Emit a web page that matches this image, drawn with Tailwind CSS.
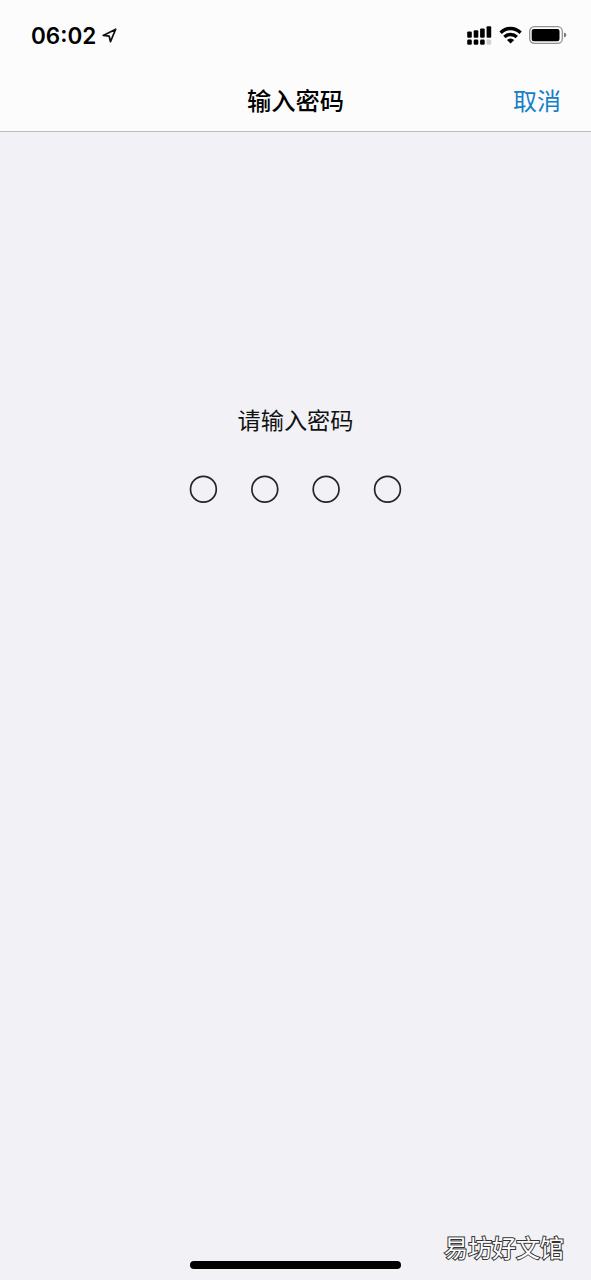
<!DOCTYPE html>
<html lang="zh-CN">
<head>
<meta charset="utf-8">
<title>输入密码</title>
<script src="https://cdn.jsdelivr.net/npm/@tailwindcss/browser@4"></script>
</head>
<body class="bg-[#f1f1f6]">
<div class="relative flex h-[1280px] w-[591px] flex-col overflow-hidden bg-[#f1f1f6] font-['Inter','Noto_Sans_CJK_SC',sans-serif] text-black">
  <header class="flex h-[132px] flex-col border-b border-[#bcbcbf] bg-[#fcfcfd]">
    <div class="flex h-[70px] items-center justify-between pl-[31px] pr-[24px]">
      <div class="flex items-center gap-[6px]">
        <span class="pt-[2px] text-[22.5px] leading-[30px] font-semibold">06:02</span>
        <svg class="mt-px h-[15px] w-[15px]" viewBox="0 0 15 15" fill="none" stroke="#111" stroke-width="1.7" stroke-linejoin="round"><path d="M13.7 1.2 1.2 7.4 7.2 8.2 8.5 13.7Z"/></svg>
      </div>
      <div class="flex items-center">
        <svg class="h-[20px] w-[25px]" viewBox="0 0 25 20" fill="#000">
          <rect x="0.2" y="6.5" width="4.6" height="6.3" rx="1.1"/><rect x="6.7" y="5.2" width="4.6" height="7.6" rx="1.1"/><rect x="13.1" y="3.4" width="4.6" height="9.4" rx="1.1"/><rect x="19.6" y="1.2" width="4.6" height="11.6" rx="1.1"/>
          <rect x="0.2" y="14.6" width="4.6" height="5.2" rx="1.3"/><rect x="6.7" y="14.6" width="4.6" height="5.2" rx="1.3"/><rect x="13.1" y="14.6" width="4.6" height="5.2" rx="1.3"/><rect x="19.6" y="14.6" width="4.6" height="5.2" rx="1.3" fill="#cfcfcf"/>
        </svg>
        <svg class="ml-[7px] h-[18px] w-[24px]" viewBox="0 0 24 18" fill="none" stroke="#000" stroke-width="3.4">
          <path d="M1.6 6.7C7.3 1.1 15.9 1.1 21.6 6.7"/><path d="M5.4 10.9C8.9 7.6 14.3 7.6 17.8 10.9"/><path d="M11.6 17.6 8 14Q11.6 11 15.2 14Z" fill="#000" stroke="none"/>
        </svg>
        <svg class="ml-[6px] h-[18px] w-[38px]" viewBox="0 0 38 18"><rect x="0.7" y="0.7" width="32.6" height="16.6" rx="4.6" fill="none" stroke="#929292" stroke-width="1.3"/><rect x="2.7" y="2.9" width="27.8" height="12.4" rx="2.2"/><path d="M35 6.4Q37.4 7.2 37.4 9T35 11.6Z" fill="#777"/></svg>
      </div>
    </div>
    <nav class="grid h-[61px] grid-cols-3 items-start pt-px">
      <h1 class="col-start-2 text-center text-[24.3px] leading-[60px] font-medium">输入密码</h1>
      <button class="pt-px pr-[30px] text-right text-[24px] leading-[60px] text-[#1580c8]">取消</button>
    </nav>
  </header>
  <main class="flex flex-col items-center pt-[269px]">
    <p class="text-[23.2px] leading-[40px] text-[#111]">请输入密码</p>
    <svg class="mt-[34px] h-[29px] w-[213px]" viewBox="0 0 213 29" fill="none" stroke="#242428" stroke-width="1.7">
      <circle cx="14.4" cy="14.3" r="12.9"/><circle cx="75.8" cy="14.3" r="12.9"/><circle cx="137.1" cy="14.3" r="12.9"/><circle cx="198.5" cy="14.3" r="12.9"/>
    </svg>
  </main>
  <footer class="mt-auto flex justify-center pb-[11px]"><div class="h-[8px] w-[211px] rounded-full bg-black"></div></footer>
  <div class="absolute right-[27px] bottom-[15px] text-[24px] leading-[32px] text-white [-webkit-text-stroke:2px_#333] [paint-order:stroke_fill]">易坊好文馆</div>
</div>
</body>
</html>
